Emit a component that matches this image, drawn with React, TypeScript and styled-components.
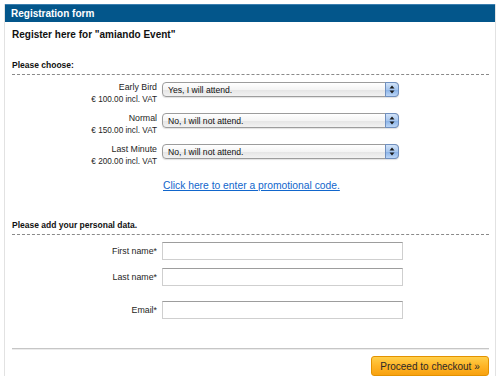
import styled, { createGlobalStyle } from "styled-components";

const GlobalStyle = createGlobalStyle`
    html, body {
        margin: 0;
        padding: 0;
        background: #ffffff;
    }
    body {
        font-family: "Liberation Sans", Arial, Helvetica, sans-serif;
        color: #222;
    }
`;

const Panel = styled.div`
    width: 492px;
    height: 372px;
    margin: 4px 0 0 4px;
    border-left: 1px solid #e2e2e2;
    border-right: 1px solid #e2e2e2;
    box-sizing: border-box;
    overflow: hidden;
`;
const Header = styled.div`
    height: 18px;
    background: #03568b;
    border-top: 1px solid #3b7fb0;
    box-sizing: border-box;
    color: #fff;
    font-weight: bold;
    font-size: 10px;
    line-height: 17px;
    padding-left: 7px;
    margin-left: -1px;
    margin-right: -1px;
`;
const Body = styled.div`
    padding: 0 6px 0 7px;
    display: flex;
    flex-direction: column;
    font-size: 9px;
    line-height: 12px;
`;
const Title = styled.h1`
    margin: 6px 0 0;
    font-size: 10px;
    line-height: 14px;
    font-weight: bold;
    color: #111;
`;
const SectionTitle = styled.h2<{ $top: number }>`
    margin: ${p => p.$top}px 0 0;
    padding-bottom: 3px;
    font-size: 8.5px;
    line-height: 12px;
    font-weight: bold;
    color: #111;
    border-bottom: 1px dashed #8a8a8a;
`;
const Rows = styled.div<{ $top: number }>`
    display: flex;
    flex-direction: column;
    margin-top: ${p => p.$top}px;
`;
const TicketRow = styled.div`
    display: grid;
    grid-template-columns: 145px 237px;
    column-gap: 5px;
    height: 31px;
`;
const LabelCell = styled.div`
    text-align: right;
    display: flex;
    flex-direction: column;
`;
const Label = styled.span`
    font-size: 8.8px;
    line-height: 13px;
    color: #1e1e1e;
`;
const Price = styled.span`
    font-size: 8.2px;
    line-height: 11px;
    color: #1e1e1e;
`;
const SelectWrap = styled.div`
    position: relative;
    height: 15px;
    margin-top: 1px;
`;
const Select = styled.select`
    appearance: none;
    -webkit-appearance: none;
    width: 100%;
    height: 15px;
    box-sizing: border-box;
    border: 1px solid #9c9c9c;
    border-radius: 4px;
    background: linear-gradient(#ffffff 0%, #f4f4f4 50%, #e4e4e4 51%, #f2f2f2 100%);
    font-family: inherit;
    font-size: 8.6px;
    color: #111;
    padding: 0 0 0 5px;
    margin: 0;
    outline: none;
    box-shadow: 0 1px 1px rgba(0, 0, 0, 0.12);
`;
const Cap = styled.span`
    position: absolute;
    right: 0;
    top: 0;
    width: 14px;
    height: 15px;
    box-sizing: border-box;
    border: 1px solid #6f8fbf;
    border-radius: 0 4px 4px 0;
    background: linear-gradient(#d2e3f8 0%, #a7c6ee 50%, #86b0e6 51%, #bcd6f6 100%);
    display: flex;
    align-items: center;
    justify-content: center;
    pointer-events: none;
`;
const PromoRow = styled.div`
    padding-left: 151px;
    margin-top: 6px;
    font-size: 10.3px;
    line-height: 12px;
`;
const PromoLink = styled.a`
    color: #1166cc;
    text-decoration: underline;
`;
const FieldRow = styled.div<{ $top: number }>`
    display: grid;
    grid-template-columns: 145px 241px;
    column-gap: 5px;
    align-items: center;
    margin-top: ${p => p.$top}px;
`;
const FieldLabel = styled.label`
    text-align: right;
    font-size: 8.8px;
    line-height: 12px;
    color: #1e1e1e;
`;
const Input = styled.input`
    height: 18px;
    box-sizing: border-box;
    border: 1px solid #cfcfcf;
    border-top-color: #9d9d9d;
    background: #fff;
    margin: 0;
    padding: 0 4px;
    font-family: inherit;
    font-size: 9px;
    outline: none;
`;
const Rule = styled.div`
    margin-top: 29px;
    height: 1px;
    background: #c6c6c6;
    border-bottom: 1px solid #ececec;
`;
const Footer = styled.div`
    display: flex;
    justify-content: flex-end;
    padding-top: 6px;
`;
const CheckoutButton = styled.button`
    width: 118px;
    height: 20px;
    box-sizing: border-box;
    border: 1px solid #e39200;
    border-radius: 3px;
    background: linear-gradient(#ffcf4a 0%, #ffb526 50%, #f8a10f 100%);
    color: #2a2a2a;
    font-family: inherit;
    font-size: 10px;
    padding: 0;
    cursor: pointer;
`;

const tickets = [
    { name: "Early Bird", price: "€ 100.00 incl. VAT", value: "Yes, I will attend." },
    { name: "Normal", price: "€ 150.00 incl. VAT", value: "No, I will not attend." },
    { name: "Last Minute", price: "€ 200.00 incl. VAT", value: "No, I will not attend." },
];

const fields = [
    { name: "First name*", top: 7 },
    { name: "Last name*", top: 8 },
    { name: "Email*", top: 15 },
];

function UpDown() {
    return <svg width="6" height="9" viewBox="0 0 6 9">
        <path d="M3 0.5 L5.5 3.5 L0.5 3.5 Z" fill="#1a1a1a" />
        <path d="M3 8.5 L5.5 5.5 L0.5 5.5 Z" fill="#1a1a1a" />
    </svg>
}

export default function App() {
    return <>
        <GlobalStyle />
        <Panel>
            <Header>Registration form</Header>
            <Body>
                <Title>Register here for "amiando Event"</Title>
                <SectionTitle $top={17}>Please choose:</SectionTitle>
                <Rows $top={6}>
                    {tickets.map(t => <TicketRow key={t.name}>
                        <LabelCell>
                            <Label>{t.name}</Label>
                            <Price>{t.price}</Price>
                        </LabelCell>
                        <SelectWrap>
                            <Select defaultValue={t.value}>
                                <option>Yes, I will attend.</option>
                                <option>No, I will not attend.</option>
                            </Select>
                            <Cap><UpDown /></Cap>
                        </SelectWrap>
                    </TicketRow>)}
                </Rows>
                <PromoRow>
                    <PromoLink href="#">Click here to enter a promotional code.</PromoLink>
                </PromoRow>
                <SectionTitle $top={27}>Please add your personal data.</SectionTitle>
                {fields.map(f => <FieldRow key={f.name} $top={f.top}>
                    <FieldLabel>{f.name}</FieldLabel>
                    <Input type="text" />
                </FieldRow>)}
                <Rule />
                <Footer>
                    <CheckoutButton>Proceed to checkout »</CheckoutButton>
                </Footer>
            </Body>
        </Panel>
    </>
}
